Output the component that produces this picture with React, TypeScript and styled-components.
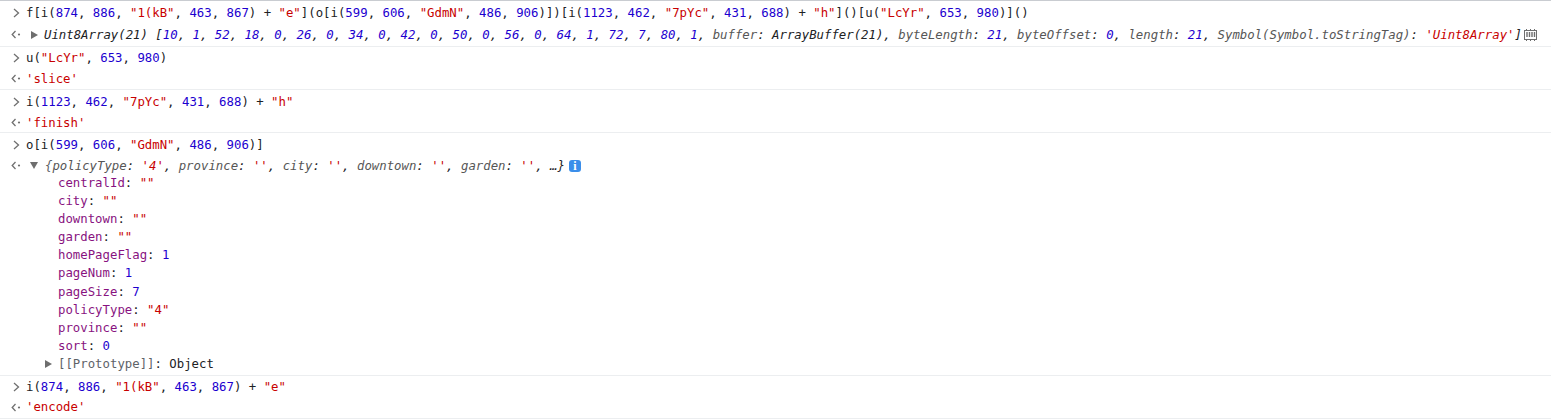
import React from 'react';
import styled, { createGlobalStyle } from 'styled-components';

const Global = createGlobalStyle`
  html, body { margin: 0; padding: 0; background: #fff; }
  body { overflow: hidden; }
`;

const Console = styled.div`
  width: 1551px;
  height: 420px;
  overflow: hidden;
  background: #fff;
  border-top: 1px solid #c9ccd1;
  padding-top: 1px;
  box-sizing: border-box;
  font-family: "DejaVu Sans Mono", "Liberation Mono", monospace;
  font-size: 12.33px;
  color: #202124;
`;

const Entry = styled.div`
  border-bottom: 1px solid #eceef0;
`;

const Line = styled.div<{ $height?: number; $drop?: number }>`
  display: flex;
  align-items: center;
  box-sizing: border-box;
  height: ${(p) => p.$height ?? 21}px;
  padding-top: ${(p) => (p.$drop ?? 0) * 2}px;
  white-space: pre;
`;

const Gutter = styled.span`
  display: flex;
  align-items: center;
  justify-content: center;
  width: 26px;
  flex: none;
  padding-left: 6px;
  box-sizing: border-box;
  color: #6e6e6e;
`;

const Triangle = styled.span<{ $open?: boolean }>`
  width: 0;
  height: 0;
  flex: none;
  border-style: solid;
  border-color: transparent;
  ${(p) =>
    p.$open
      ? 'margin: 0 7px 0 4px; border-width: 7px 4px 0 4px; border-top-color: #6e6e6e;'
      : 'margin: 0 6px 0 5px; border-width: 4px 0 4px 7px; border-left-color: #6e6e6e;'}
`;

const Italic = styled.span`
  font-style: italic;
`;

const Num = styled.span`
  color: #1c00cf;
`;
const Str = styled.span`
  color: #c80000;
`;
const Key = styled.span`
  color: #565656;
`;
const Prop = styled.span`
  color: #881280;
`;
const Dim = styled.span`
  color: #5e6368;
`;

const Tree = styled.div`
  display: flex;
  flex-direction: column;
  margin-top: -1px;
  padding: 0 0 1.9px 58px;
`;

const TreeRow = styled.div`
  height: 18.1px;
  line-height: 18.1px;
  white-space: pre;
`;

const ProtoRow = styled(TreeRow)`
  display: flex;
  align-items: center;
  margin-left: -13px;
`;

const ProtoTriangle = styled.span`
  width: 0;
  height: 0;
  flex: none;
  margin-right: 6px;
  border-style: solid;
  border-color: transparent;
  border-width: 4px 0 4px 7px;
  border-left-color: #6e6e6e;
`;

const InfoBadge = styled.span`
  display: inline-flex;
  align-items: center;
  justify-content: center;
  width: 12px;
  height: 12px;
  margin-left: 4px;
  border-radius: 3px;
  background: #3b8eea;
  color: #fff;
  font-family: "Liberation Serif", serif;
  font-weight: 700;
  font-size: 12px;
  line-height: 12px;
`;

const MemoryIcon = styled.svg`
  flex: none;
  width: 15px;
  height: 14px;
  margin-left: 1px;
`;

const PromptIcon = () => (
  <svg width="7" height="10" viewBox="0 0 7 10" fill="none">
    <path d="M1 1l4.5 4L1 9" stroke="#707070" strokeWidth="1.3" />
  </svg>
);

const ResultIcon = () => (
  <svg width="10" height="9" viewBox="0 0 10 9" fill="none">
    <path d="M4.5 1L1.2 4.5 4.5 8" stroke="#707070" strokeWidth="1.3" />
    <circle cx="8" cy="4.5" r="1.1" fill="#707070" />
  </svg>
);

const Code = ({ parts }: { parts: (string | [string])[] }) => (
  <span>
    {parts.map((p, i) =>
      typeof p === 'string' ? <React.Fragment key={i}>{p}</React.Fragment> : /^"/.test(p[0]) ? <Str key={i}>{p[0]}</Str> : <Num key={i}>{p[0]}</Num>
    )}
  </span>
);

const Input = ({ parts, drop }: { parts: (string | [string])[]; drop?: number }) => (
  <Line $drop={drop}>
    <Gutter>
      <PromptIcon />
    </Gutter>
    <Code parts={parts} />
  </Line>
);

const Result = ({ text, drop }: { text: string; drop?: number }) => (
  <Line $drop={drop}>
    <Gutter>
      <ResultIcon />
    </Gutter>
    <Str>{text}</Str>
  </Line>
);

const bytes = [10, 1, 52, 18, 0, 26, 0, 34, 0, 42, 0, 50, 0, 56, 0, 64, 1, 72, 7, 80, 1];

const props: [string, string, boolean][] = [
  ['centralId', '""', true],
  ['city', '""', true],
  ['downtown', '""', true],
  ['garden', '""', true],
  ['homePageFlag', '1', false],
  ['pageNum', '1', false],
  ['pageSize', '7', false],
  ['policyType', '"4"', true],
  ['province', '""', true],
  ['sort', '0', false],
];

const preview: [string, string][] = [
  ['policyType', "'4'"],
  ['province', "''"],
  ['city', "''"],
  ['downtown', "''"],
  ['garden', "''"],
];

export default function App() {
  return (
    <Console>
      <Global />
      <Entry>
        <Input
          parts={[
            'f[i(', ['874'], ', ', ['886'], ', ', ['"1(kB"'], ', ', ['463'], ', ', ['867'], ') + ', ['"e"'], '](o[i(',
            ['599'], ', ', ['606'], ', ', ['"GdmN"'], ', ', ['486'], ', ', ['906'], ')])[i(',
            ['1123'], ', ', ['462'], ', ', ['"7pYc"'], ', ', ['431'], ', ', ['688'], ') + ', ['"h"'], ']()[u(',
            ['"LcYr"'], ', ', ['653'], ', ', ['980'], ')]()',
          ]}
        />
        <Line $height={23}>
          <Gutter>
            <ResultIcon />
          </Gutter>
          <Triangle />
          <Italic>
            Uint8Array(21) [
            {bytes.map((b, i) => (
              <React.Fragment key={i}>
                <Num>{b}</Num>
                {', '}
              </React.Fragment>
            ))}
            <Key>buffer</Key>: ArrayBuffer(21), <Key>byteLength</Key>: <Num>21</Num>, <Key>byteOffset</Key>: <Num>0</Num>,{' '}
            <Key>length</Key>: <Num>21</Num>, <Key>Symbol(Symbol.toStringTag)</Key>: <Str>'Uint8Array'</Str>]
          </Italic>
          <MemoryIcon viewBox="0 0 15 14" fill="none">
            <rect x="1.5" y="2.5" width="12" height="9" stroke="#6e6e6e" />
            <path d="M4 4v5M6.5 4v5M9 4v5M11.5 4v5" stroke="#6e6e6e" strokeWidth="1.4" />
            <path d="M3.5 1v1.5M7.5 1v1.5M11.5 1v1.5M3.5 11.5V13M7.5 11.5V13M11.5 11.5V13" stroke="#6e6e6e" />
          </MemoryIcon>
        </Line>
      </Entry>
      <Entry>
        <Input parts={['u(', ['"LcYr"'], ', ', ['653'], ', ', ['980'], ')']} />
        <Result text="'slice'" />
      </Entry>
      <Entry>
        <Input drop={1} parts={['i(', ['1123'], ', ', ['462'], ', ', ['"7pYc"'], ', ', ['431'], ', ', ['688'], ') + ', ['"h"']]} />
        <Result drop={1} text="'finish'" />
      </Entry>
      <Entry>
        <Input drop={1} parts={['o[i(', ['599'], ', ', ['606'], ', ', ['"GdmN"'], ', ', ['486'], ', ', ['906'], ')]']} />
        <Line $drop={1}>
          <Gutter>
            <ResultIcon />
          </Gutter>
          <Triangle $open />
          <Italic>
            <Dim>{'{'}</Dim>
            {preview.map(([k, v]) => (
              <React.Fragment key={k}>
                <Key>{k}</Key>: <Str>{v}</Str>,{' '}
              </React.Fragment>
            ))}
            …{'}'}
          </Italic>
          <InfoBadge>i</InfoBadge>
        </Line>
        <Tree>
          {props.map(([k, v, isStr]) => (
            <TreeRow key={k}>
              <Prop>{k}</Prop>: {isStr ? <Str>{v}</Str> : <Num>{v}</Num>}
            </TreeRow>
          ))}
          <ProtoRow>
            <ProtoTriangle />
            <span>
              <Dim>[[Prototype]]</Dim>: Object
            </span>
          </ProtoRow>
        </Tree>
      </Entry>
      <Entry>
        <Input drop={1} parts={['i(', ['874'], ', ', ['886'], ', ', ['"1(kB"'], ', ', ['463'], ', ', ['867'], ') + ', ['"e"']]} />
        <Result text="'encode'" />
      </Entry>
    </Console>
  );
}
